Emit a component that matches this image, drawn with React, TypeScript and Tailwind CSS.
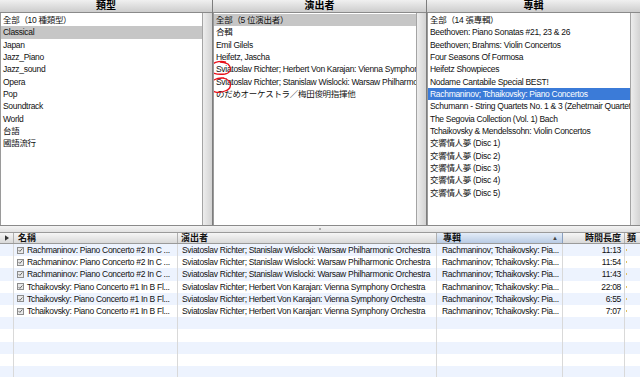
import type { ReactNode } from "react";

const genres = [
  "全部（10 種類型）",
  "Classical",
  "Japan",
  "Jazz_Piano",
  "Jazz_sound",
  "Opera",
  "Pop",
  "Soundtrack",
  "World",
  "台語",
  "國語流行",
];

const artists = [
  "全部（5 位演出者）",
  "合輯",
  "Emil Gilels",
  "Heifetz, Jascha",
  "Sviatoslav Richter; Herbert Von Karajan: Vienna Symphony Orchestra",
  "Sviatoslav Richter; Stanislaw Wislocki: Warsaw Philharmonic Orchestra",
  "のだめオーケストラ／梅田俊明指揮他",
];

const albums = [
  "全部（14 張專輯）",
  "Beethoven: Piano Sonatas #21, 23 & 26",
  "Beethoven; Brahms: Violin Concertos",
  "Four Seasons Of Formosa",
  "Heifetz Showpieces",
  "Nodame Cantabile Special BEST!",
  "Rachmaninov; Tchaikovsky: Piano Concertos",
  "Schumann - String Quartets No. 1 & 3 (Zehetmair Quartet)",
  "The Segovia Collection (Vol. 1) Bach",
  "Tchaikovsky & Mendelssohn: Violin Concertos",
  "交響情人夢 (Disc 1)",
  "交響情人夢 (Disc 2)",
  "交響情人夢 (Disc 3)",
  "交響情人夢 (Disc 4)",
  "交響情人夢 (Disc 5)",
];

const rach = "Rachmaninov: Piano Concerto #2 In C ...";
const tchai = "Tchaikovsky: Piano Concerto #1 In B Fl...";
const wislocki = "Sviatoslav Richter; Stanislaw Wislocki: Warsaw Philharmonic Orchestra";
const karajan = "Sviatoslav Richter; Herbert Von Karajan: Vienna Symphony Orchestra";
const album = "Rachmaninov; Tchaikovsky: Pia...";

const tracks = [
  { name: rach, artist: wislocki, time: "11:13" },
  { name: rach, artist: wislocki, time: "11:54" },
  { name: rach, artist: wislocki, time: "11:43" },
  { name: tchai, artist: karajan, time: "22:08" },
  { name: tchai, artist: karajan, time: "6:55" },
  { name: tchai, artist: karajan, time: "7:07" },
];

type Sel = "gray" | "blue" | null;

function Browser({
  title,
  items,
  selected,
  sel,
  children,
}: {
  title: string;
  items: string[];
  selected: number;
  sel: Sel;
  children?: ReactNode;
}) {
  return (
    <div className="flex flex-col min-w-0 border-r border-[#7d7d7d] last:border-r-0">
      <div className="h-[13px] flex items-center justify-center bg-gradient-to-b from-[#f0f0f0] to-[#cdcdcd] border-b border-[#8a8a8a] text-[10px] font-bold leading-none tracking-normal text-black">
        {title}
      </div>
      <div className="flex flex-1 min-h-0">
        <div className="relative flex-1 min-w-0 bg-white border-l border-[#9a9a9a] overflow-hidden pt-px">
          {items.map((it, i) => (
            <div
              key={it}
              className={
                "h-[12.35px] leading-[12.35px] pl-[2px] whitespace-nowrap " +
                (i === selected
                  ? sel === "blue"
                    ? "bg-[#3b7bd8] text-white"
                    : "bg-[#c6c6c6] text-[#111]"
                  : "text-[#111]")
              }
            >
              {it}
            </div>
          ))}
          {children}
        </div>
        <div className="w-[10px] border-l border-[#a4a4a4] bg-gradient-to-r from-[#ededed] to-[#d3d3d3]" />
      </div>
    </div>
  );
}

function Check() {
  return (
    <span className="inline-flex items-center justify-center w-[7px] h-[7px] border border-[#8c8c8c] bg-[#e9e9e9] mr-[3px] shrink-0">
      <svg viewBox="0 0 8 8" className="w-[6px] h-[6px]">
        <path d="M1 4.2 L3 6.2 L7 1.6" stroke="#555" strokeWidth="1.4" fill="none" />
      </svg>
    </span>
  );
}

export default function App() {
  const rows = Array.from({ length: 11 }, (_, i) => tracks[i] ?? null);

  return (
    <div className="w-[640px] h-[377px] overflow-hidden flex flex-col bg-white text-[8.5px] tracking-[-0.3px] font-['Liberation_Sans','Noto_Sans_CJK_TC',sans-serif] text-[#111]">
      <div className="grid grid-cols-[213px_214px_213px] h-[226px] border-b border-[#8a8a8a]">
        <Browser title="類型" items={genres} selected={1} sel="gray" />
        <Browser title="演出者" items={artists} selected={0} sel="gray">
          <svg className="absolute left-[-5px] top-[45px] w-[30px] h-[38px] pointer-events-none" viewBox="0 0 30 38">
            <path
              d="M17 4 C10 2 2 5 1 10 C0 15 8 17 16 16 C22 15 23 10 19 6 C17 5 14 4 11 4"
              stroke="#e8101a"
              strokeWidth="1.3"
              fill="none"
            />
            <path
              d="M15 20 C8 19 1 23 1 28 C1 34 9 36 16 33 C23 31 23 24 17 21 C15 20 12 20 9 21"
              stroke="#e8101a"
              strokeWidth="1.3"
              fill="none"
            />
          </svg>
        </Browser>
        <Browser title="專輯" items={albums} selected={6} sel="blue" />
      </div>

      <div className="h-[6px] bg-gradient-to-b from-[#f4f4f4] to-[#e2e2e2] flex items-center justify-center">
        <span className="w-[2px] h-[2px] rounded-full bg-[#9a9a9a]" />
      </div>

      <div className="grid grid-cols-[14px_164px_259px_126px_62px_15px] h-[12px] border-y border-[#9a9a9a] bg-gradient-to-b from-[#f6f6f6] to-[#d9d9d9] text-[9px] font-bold leading-[10px] tracking-normal">
        <div className="border-r border-[#b0b0b0] flex items-center justify-center">
          <svg viewBox="0 0 6 8" className="w-[4px] h-[6px]">
            <path d="M0 0 L6 4 L0 8 Z" fill="#333" />
          </svg>
        </div>
        <div className="border-r border-[#b0b0b0] pl-[4px]">名稱</div>
        <div className="border-r border-[#b0b0b0] pl-[3px]">演出者</div>
        <div className="border-r border-[#8aa0c0] pl-[6px] flex items-center justify-between pr-[4px] bg-gradient-to-b from-[#e4edf8] to-[#b9cbe4]">
          <span>專輯</span>
          <span className="text-[6px] text-[#444]">▲</span>
        </div>
        <div className="border-r border-[#b0b0b0] text-right pr-[3px]">時間長度</div>
        <div className="pl-[2px] overflow-hidden">類</div>
      </div>

      <div className="flex-1 overflow-hidden">
        {rows.map((t, i) => (
          <div
            key={i}
            className={
              "grid grid-cols-[14px_164px_259px_126px_62px_15px] h-[12.2px] leading-[12.2px] " +
              (i % 2 === 0 ? "bg-[#edf3fe]" : "bg-white")
            }
          >
            <div className="border-r border-[#d9d9d9]" />
            <div className="border-r border-[#d9d9d9] pl-[3px] flex items-center whitespace-nowrap overflow-hidden">
              {t && (
                <>
                  <Check />
                  <span>{t.name}</span>
                </>
              )}
            </div>
            <div className="border-r border-[#d9d9d9] pl-[4px] whitespace-nowrap overflow-hidden">{t?.artist}</div>
            <div className="border-r border-[#d9d9d9] pl-[5px] whitespace-nowrap overflow-hidden">{t && album}</div>
            <div className="border-r border-[#d9d9d9] text-right pr-[3px]">{t?.time}</div>
            <div className="pl-[1px] flex items-center">
              {t && <span className="w-[1px] h-[2px] bg-[#e0c060]" />}
            </div>
          </div>
        ))}
      </div>
    </div>
  );
}
